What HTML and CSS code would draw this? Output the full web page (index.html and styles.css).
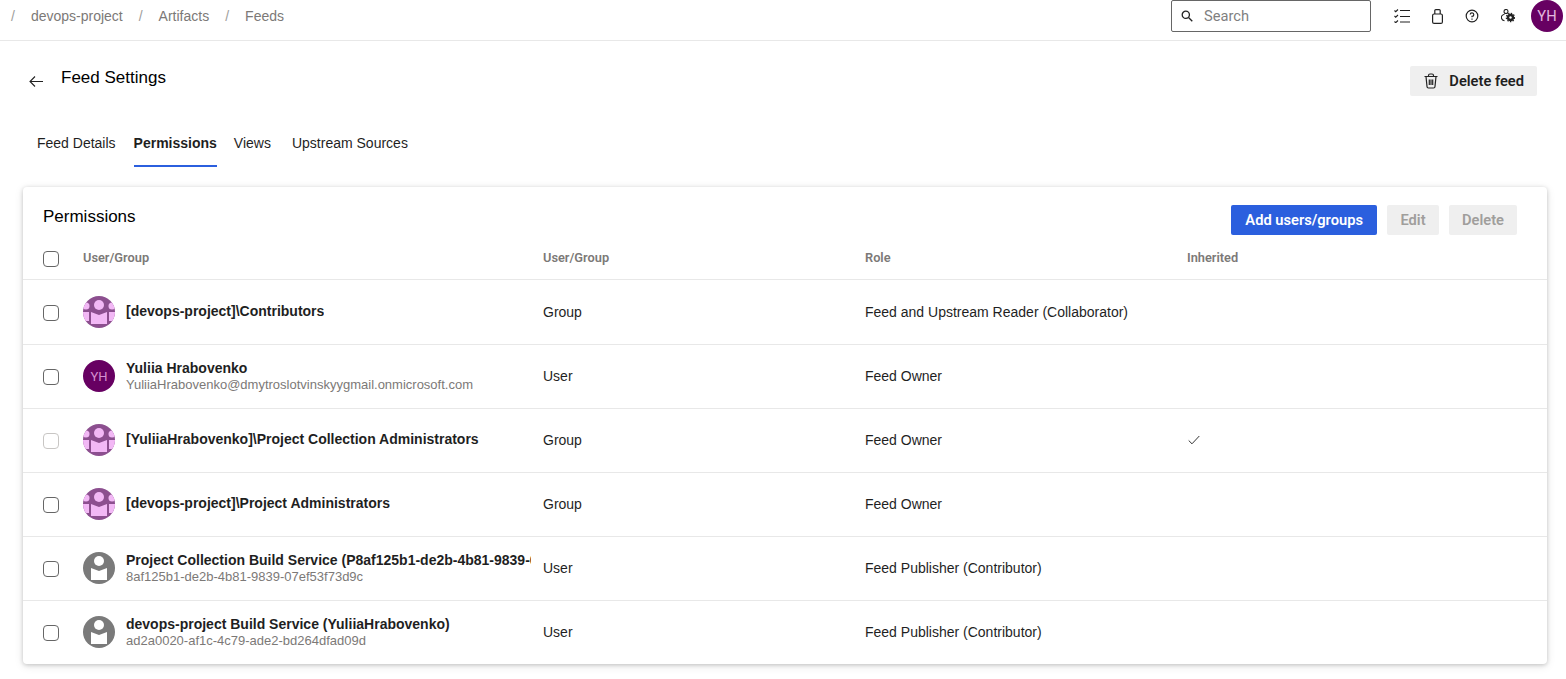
FILE: index.html
```html
<!DOCTYPE html>
<html lang="en">
<head>
    <meta charset="UTF-8">
    <meta name="viewport" content="width=device-width, initial-scale=1.0">
    <title>Feed Settings</title>
    <link rel="stylesheet" href="styles.css">
</head>
<body>
    <svg class="svg-defs" width="0" height="0">
        <clipPath id="avatar-clip"><circle cx="16" cy="16" r="16"/></clipPath>
        <symbol id="group-icon" viewBox="0 0 32 32">
            <g clip-path="url(#avatar-clip)">
                <rect width="32" height="32" fill="#8c4f8f"/>
                <circle cx="16" cy="9" r="5" fill="#f2b8f5"/>
                <circle cx="3" cy="10" r="3.500" fill="#f2b8f5"/>
                <circle cx="29" cy="10" r="3.500" fill="#f2b8f5"/>
                <path d="M8 16 16 19 24 16V28H8Z" fill="#f2b8f5"/>
                <path d="M0 16H6V25H0Z M26 16H32V25H26Z" fill="#f2b8f5"/>
            </g>
        </symbol>
        <symbol id="service-icon" viewBox="0 0 32 32">
            <circle cx="16" cy="16" r="16" fill="#7a7a7a"/>
            <circle cx="16" cy="9" r="5" fill="#fff"/>
            <path d="M8 16 16 19 24 16V28H8Z" fill="#fff"/>
        </symbol>
    </svg>

    <header class="topbar">
        <nav class="breadcrumb">
            <span class="sep first">/</span>
            <a>devops-project</a>
            <span class="sep">/</span>
            <a>Artifacts</a>
            <span class="sep">/</span>
            <a>Feeds</a>
        </nav>
        <div class="search-box">
            <svg width="12" height="12" viewBox="0 0 12 12" fill="none" stroke="#222" stroke-width="1.300"><circle cx="4.800" cy="4.800" r="3.600"/><path d="M7.500 7.500 11.300 11.300"/></svg>
            <span>Search</span>
        </div>
        <div class="top-icons">
            <svg width="16" height="14" viewBox="0 0 16 14" fill="none" stroke="#222" stroke-width="1.100"><path d="M6 1.500H16M6 7.500H16M6 13H16"/><path d="M.500 1.500 1.700 2.700 4 .500M.500 7 1.700 8.200 4 6M.500 12.500 1.700 13.700 4 11.500"/></svg>
            <svg width="11" height="15" viewBox="0 0 11 15" fill="none" stroke="#222" stroke-width="1.200"><rect x=".6" y="5" width="9.800" height="9.400" rx="1.500"/><path d="M2.800 5V1.600A1 1 0 0 1 3.800 .6H7.200A1 1 0 0 1 8.200 1.600V5"/></svg>
            <svg width="14" height="14" viewBox="0 0 14 14" fill="none" stroke="#222" stroke-width="1.200"><circle cx="7" cy="7" r="5.800"/><path d="M5.200 5.500A1.800 1.800 0 1 1 7 7.400V8.300M7 9.600V10.700"/></svg>
            <svg width="14" height="14" viewBox="0 0 14 14" fill="none" stroke="#222" stroke-width="1.100"><circle cx="5" cy="2.500" r="2"/><path d="M3.500 5.200C1 5.700 0 7.500 .6 9.500 .9 10.700 2 11.500 3.500 11.800"/><circle cx="9.500" cy="8.500" r="3.700" stroke="none" fill="#222"/><circle cx="9.500" cy="8.500" r="4.200" stroke="#222" stroke-width="1.200" stroke-dasharray="1.400 1.400"/><circle cx="9.500" cy="8.500" r="1.200" stroke="none" fill="#fff"/></svg>
        </div>
        <div class="avatar top-avatar">YH</div>
    </header>

    <main class="page">
        <div class="page-head">
            <div class="page-title">
                <svg width="14" height="12" viewBox="0 0 14 12" fill="none" stroke="#222" stroke-width="1.100"><path d="M14 6.500H1M6 1.500 1 6.500 6 11.500"/></svg>
                <h1>Feed Settings</h1>
            </div>
            <button class="btn btn-light">
                <svg width="16" height="16" viewBox="0 0 16 16" fill="none" stroke="#222" stroke-width="1.200"><path d="M1.500 3.500H14.500M5.500 3.500V2.500A1.500 1.500 0 0 1 7 1H9A1.500 1.500 0 0 1 10.500 2.500V3.500M3 3.500 4 13.500A1.500 1.500 0 0 0 5.500 15H10.500A1.500 1.500 0 0 0 12 13.500L13 3.500M6.300 6.500V12M8 6.500V12M9.700 6.500V12"/></svg>
                Delete feed
            </button>
        </div>

        <div class="tabs">
            <a class="tab">Feed Details</a>
            <a class="tab active">Permissions</a>
            <a class="tab">Views</a>
            <a class="tab">Upstream Sources</a>
        </div>

        <section class="card">
            <div class="card-head">
                <h2>Permissions</h2>
                <div class="card-actions">
                    <button class="btn btn-primary">Add users/groups</button>
                    <button class="btn btn-edit btn-disabled">Edit</button>
                    <button class="btn btn-disabled">Delete</button>
                </div>
            </div>

            <div class="table-row table-header">
                <div class="check-cell"><span class="checkbox"></span></div>
                <div>User/Group</div>
                <div>User/Group</div>
                <div>Role</div>
                <div>Inherited</div>
            </div>

            <div class="table-row first-row">
                <div class="check-cell"><span class="checkbox"></span></div>
                <div class="identity">
                    <svg class="avatar-icon"><use href="#group-icon"/></svg>
                    <div class="identity-text single"><div class="name">[devops-project]\Contributors</div></div>
                </div>
                <div>Group</div>
                <div>Feed and Upstream Reader (Collaborator)</div>
                <div></div>
            </div>

            <div class="table-row">
                <div class="check-cell"><span class="checkbox"></span></div>
                <div class="identity">
                    <div class="avatar">YH</div>
                    <div class="identity-text">
                        <div class="name">Yuliia Hrabovenko</div>
                        <div class="sub">YuliiaHrabovenko@dmytroslotvinskyygmail.onmicrosoft.com</div>
                    </div>
                </div>
                <div>User</div>
                <div>Feed Owner</div>
                <div></div>
            </div>

            <div class="table-row">
                <div class="check-cell"><span class="checkbox disabled"></span></div>
                <div class="identity">
                    <svg class="avatar-icon"><use href="#group-icon"/></svg>
                    <div class="identity-text single"><div class="name">[YuliiaHrabovenko]\Project Collection Administrators</div></div>
                </div>
                <div>Group</div>
                <div>Feed Owner</div>
                <div class="inherited"><svg width="12" height="10" viewBox="0 0 12 10" fill="none" stroke="#333" stroke-width="1"><path d="M.7 5.500 4 8.800 11.300 1"/></svg></div>
            </div>

            <div class="table-row">
                <div class="check-cell"><span class="checkbox"></span></div>
                <div class="identity">
                    <svg class="avatar-icon"><use href="#group-icon"/></svg>
                    <div class="identity-text single"><div class="name">[devops-project]\Project Administrators</div></div>
                </div>
                <div>Group</div>
                <div>Feed Owner</div>
                <div></div>
            </div>

            <div class="table-row">
                <div class="check-cell"><span class="checkbox"></span></div>
                <div class="identity">
                    <svg class="avatar-icon"><use href="#service-icon"/></svg>
                    <div class="identity-text">
                        <div class="name">Project Collection Build Service (P8af125b1-de2b-4b81-9839-0</div>
                        <div class="sub">8af125b1-de2b-4b81-9839-07ef53f73d9c</div>
                    </div>
                </div>
                <div>User</div>
                <div>Feed Publisher (Contributor)</div>
                <div></div>
            </div>

            <div class="table-row last-row">
                <div class="check-cell"><span class="checkbox"></span></div>
                <div class="identity">
                    <svg class="avatar-icon"><use href="#service-icon"/></svg>
                    <div class="identity-text">
                        <div class="name">devops-project Build Service (YuliiaHrabovenko)</div>
                        <div class="sub">ad2a0020-af1c-4c79-ade2-bd264dfad09d</div>
                    </div>
                </div>
                <div>User</div>
                <div>Feed Publisher (Contributor)</div>
                <div></div>
            </div>
        </section>
    </main>
</body>
</html>
```

FILE: styles.css
```css
* {
    box-sizing: border-box;
}
body {
    margin: 0;
    font-family: "Liberation Sans", Arial, sans-serif;
    font-size: 14px;
    color: #1f1f1f;
    background-color: #fff;
}
h1, h2 {
    margin: 0;
    font-weight: 400;
    font-size: 17px;
    color: #000;
}
.svg-defs {
    position: absolute;
}

/* top bar */
.topbar {
    display: flex;
    align-items: flex-start;
    height: 41px;
    border-bottom: 1px solid #e8e8e8;
}
.breadcrumb {
    display: flex;
    flex: 1;
    height: 32px;
    align-items: center;
    padding-left: 11px;
    color: #7c7977;
}
.breadcrumb .sep {
    margin: 0 16px;
    color: #a09e9c;
}
.breadcrumb .sep.first {
    margin: 0 16px 0 0;
}
.search-box {
    display: flex;
    align-items: center;
    gap: 11px;
    width: 200px;
    height: 32px;
    padding-left: 9px;
    border: 1px solid #666;
    border-radius: 2px;
    font-family: Roboto, sans-serif;
    font-size: 14.670px;
    color: #7f7f7f;
}
.top-icons {
    display: flex;
    align-items: center;
    gap: 22px;
    height: 32px;
    margin-left: 23px;
    margin-right: 16px;
}
.avatar {
    display: flex;
    flex: none;
    align-items: center;
    justify-content: center;
    width: 32px;
    height: 32px;
    border-radius: 50%;
    background: #670062;
    color: #d48fd0;
    font-family: Roboto, sans-serif;
    font-size: 13px;
}
.top-avatar {
    margin-right: 3px;
    color: #e2b8df;
    font-size: 14.670px;
}

/* page head */
.page {
    padding: 0 19px 15px 23px;
}
.page-head {
    display: flex;
    justify-content: space-between;
    align-items: flex-start;
    padding-top: 25px;
    padding-right: 10px;
}
.page-title {
    display: flex;
    align-items: flex-start;
    gap: 18px;
    padding-left: 6px;
    padding-top: 2px;
}
.page-title svg {
    margin-top: 7px;
}
.btn {
    display: inline-flex;
    align-items: center;
    justify-content: center;
    height: 30px;
    padding: 0 13px;
    border: none;
    border-radius: 2px;
    font-family: Roboto, sans-serif;
    font-size: 14.670px;
    font-weight: 600;
}
.btn-light {
    gap: 10px;
    background: #efefef;
    color: #1f1f1f;
}
.btn-primary {
    padding: 0 14px;
    background: #2b5fde;
    color: #fff;
}
.btn-edit {
    padding: 0 13.500px;
}
.btn-disabled {
    background: #efefef;
    color: #a09e9c;
}

/* tabs */
.tabs {
    display: flex;
    margin-top: 27px;
    padding-left: 14px;
}
.tab {
    height: 44px;
    padding-top: 12px;
    margin-right: 18px;
    color: #1f1f1f;
}
.tab.active {
    margin-right: 17px;
    font-weight: 700;
    border-bottom: 2px solid #2b5fde;
}
.tab.active + .tab {
    margin-right: 21px;
}

/* card */
.card {
    margin-top: 20px;
    background: #fff;
    border-radius: 4px;
    box-shadow: 0 1px 4px rgba(0, 0, 0, 0.18), 0 2px 10px rgba(0, 0, 0, 0.1);
}
.card-head {
    display: flex;
    justify-content: space-between;
    align-items: flex-start;
    padding: 18px 30px 0 20px;
}
.card-head h2 {
    padding-top: 2px;
}
.card-actions {
    display: flex;
    gap: 10px;
}
.table-row {
    display: grid;
    grid-template-columns: 60px 460px 322px 322px 1fr;
    align-items: center;
    height: 64px;
    padding-bottom: 1px;
    border-bottom: 1px solid #e8e8e8;
}
.table-row > div {
    min-width: 0;
}
.table-header {
    height: 45px;
    padding-bottom: 0;
    font-family: Roboto, sans-serif;
    font-size: 12.800px;
    font-weight: 600;
    color: #7c7977;
}
.first-row {
    height: 65px;
}
.last-row {
    height: 63px;
    border-bottom: none;
}
.check-cell {
    display: flex;
    padding-left: 20px;
    padding-top: 2px;
}
.table-header .check-cell {
    padding-top: 3px;
}
.checkbox {
    width: 16px;
    height: 16px;
    border: 1px solid #666;
    border-radius: 4px;
}
.checkbox.disabled {
    border-color: #c8c6c4;
}
.identity {
    display: flex;
    align-items: center;
    gap: 11px;
    padding-right: 12px;
}
.avatar-icon {
    flex: none;
    width: 32px;
    height: 32px;
}
.identity-text {
    min-width: 0;
    overflow: hidden;
}
.identity-text.single {
    margin-top: -1px;
}
.first-row .identity-text.single {
    margin-top: 0;
}
.name {
    font-weight: 700;
    white-space: nowrap;
    line-height: 17px;
}
.sub {
    font-size: 13px;
    color: #7c7977;
    white-space: nowrap;
    line-height: 15px;
}
.inherited {
    display: flex;
    margin-left: 1px;
    padding-bottom: 1px;
}
```
